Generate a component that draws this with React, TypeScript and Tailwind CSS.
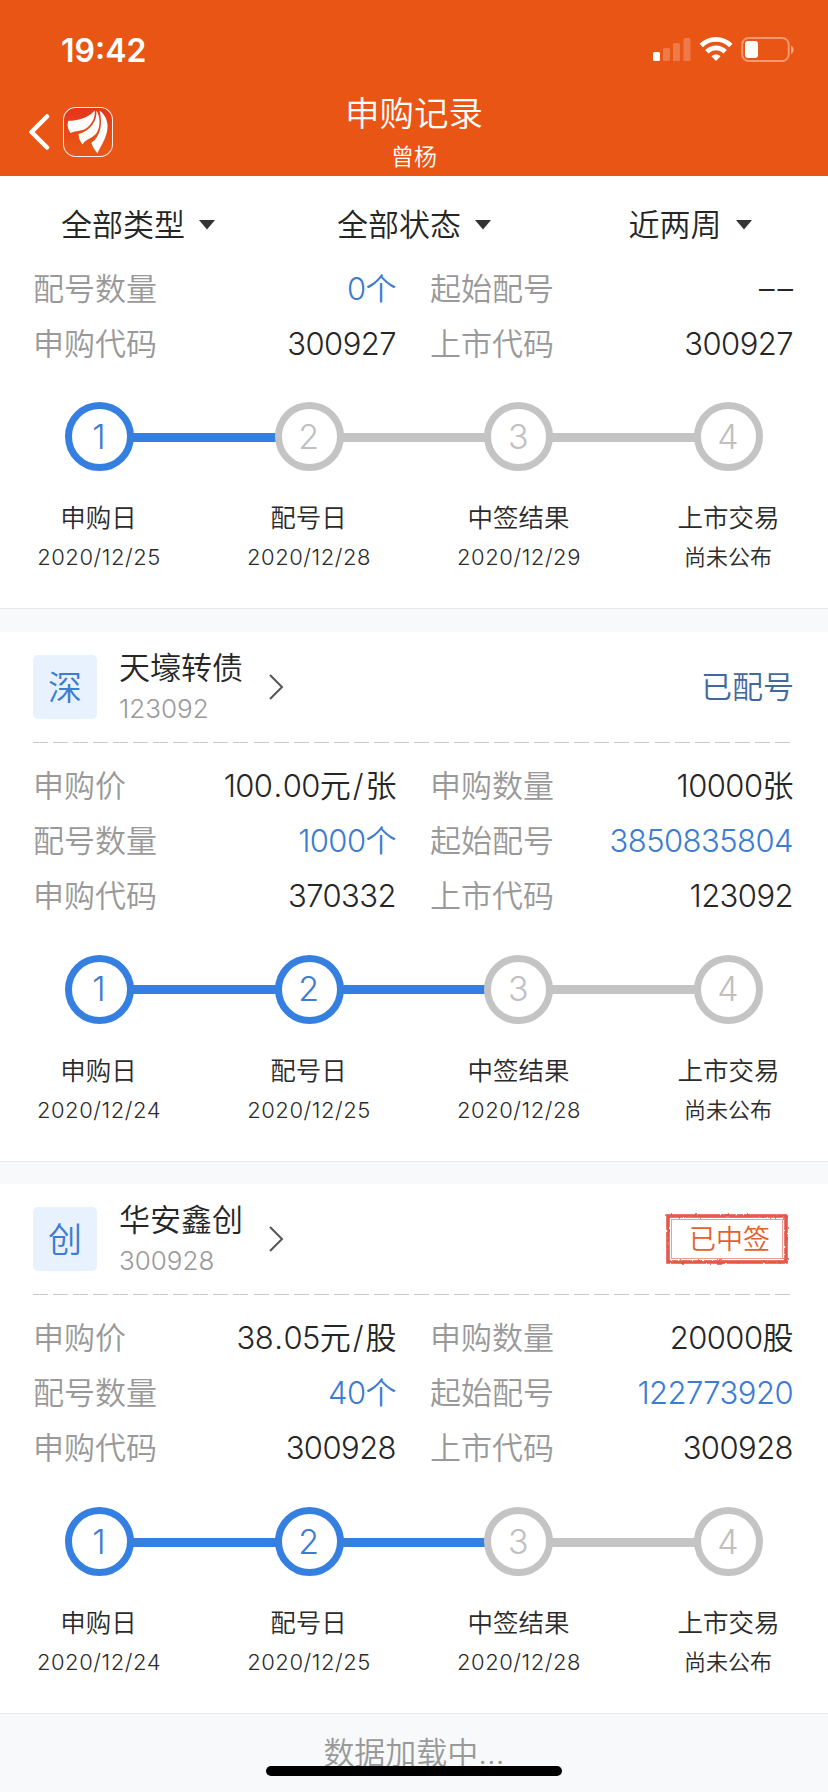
import clsx from 'clsx';

interface Field {
  label: string;
  value: string;
  link?: boolean;
}

interface Step {
  title: string;
  date: string;
}

interface RecordItem {
  badge?: string;
  name?: string;
  code?: string;
  status?: string;
  won?: boolean;
  fields: Field[];
  steps: Step[];
  reached: number;
}

const makeSteps = (a: string, b: string, c: string): Step[] => [
  { title: '申购日', date: a },
  { title: '配号日', date: b },
  { title: '中签结果', date: c },
  { title: '上市交易', date: '尚未公布' },
];

const records: RecordItem[] = [
  {
    fields: [
      { label: '配号数量', value: '0个', link: true },
      { label: '起始配号', value: '––' },
      { label: '申购代码', value: '300927' },
      { label: '上市代码', value: '300927' },
    ],
    steps: makeSteps('2020/12/25', '2020/12/28', '2020/12/29'),
    reached: 1,
  },
  {
    badge: '深',
    name: '天壕转债',
    code: '123092',
    status: '已配号',
    fields: [
      { label: '申购价', value: '100.00元/张' },
      { label: '申购数量', value: '10000张' },
      { label: '配号数量', value: '1000个', link: true },
      { label: '起始配号', value: '3850835804', link: true },
      { label: '申购代码', value: '370332' },
      { label: '上市代码', value: '123092' },
    ],
    steps: makeSteps('2020/12/24', '2020/12/25', '2020/12/28'),
    reached: 2,
  },
  {
    badge: '创',
    name: '华安鑫创',
    code: '300928',
    status: '已中签',
    won: true,
    fields: [
      { label: '申购价', value: '38.05元/股' },
      { label: '申购数量', value: '20000股' },
      { label: '配号数量', value: '40个', link: true },
      { label: '起始配号', value: '122773920', link: true },
      { label: '申购代码', value: '300928' },
      { label: '上市代码', value: '300928' },
    ],
    steps: makeSteps('2020/12/24', '2020/12/25', '2020/12/28'),
    reached: 2,
  },
];

function StatusIcons() {
  return (
    <svg width="142" height="26" viewBox="0 0 142 26" fill="#fff">
      <rect x="0" y="15" width="7" height="9" rx="1.5" />
      <g opacity="0.22">
        <rect x="10" y="11" width="7" height="13" rx="1.5" />
        <rect x="20" y="6" width="7" height="18" rx="1.5" />
        <rect x="30.5" y="1" width="7" height="23" rx="1.5" />
      </g>
      <g fill="none" stroke="#fff" strokeWidth="4.8">
        <path d="M48.2 8.6C56.8 0.4 69.2 0.4 77.8 8.6" />
        <path d="M53.8 14.8C59.2 9.6 66.8 9.6 72.2 14.8" />
      </g>
      <path d="M58.4 19.2C61 16.8 65 16.8 67.6 19.2L63 24Z" />
      <rect x="89.2" y="1" width="46.5" height="23" rx="6.5" fill="none" stroke="#fff" strokeOpacity="0.4" strokeWidth="2" />
      <rect x="92" y="4" width="13" height="17" rx="3" />
      <path d="M138 8.5C141.5 10 141.5 15.5 138 17Z" fillOpacity="0.5" />
    </svg>
  );
}

function AppLogo() {
  return (
    <svg width="50" height="50" viewBox="0 0 148 148">
      <defs>
        <linearGradient id="logo-bg" x1="0" y1="0" x2="0" y2="1">
          <stop offset="0" stopColor="#e5331b" />
          <stop offset="0.8" stopColor="#e95514" />
        </linearGradient>
      </defs>
      <rect x="1.5" y="1.5" width="145" height="145" rx="36" fill="url(#logo-bg)" stroke="#fff" strokeOpacity="0.9" strokeWidth="3" />
      <g fill="#fff">
        <path d="M94 10C72 34 45 39 16 41C11 53 15 67 22 77C38 68 58 74 74 59C88 46 96 28 94 10Z" />
        <path d="M99 10C101 40 84 68 46 80C46 92 51 103 58 111C65 94 88 94 100 76C111 56 111 30 99 10Z" />
        <path d="M108 10C118 48 112 86 84 106C87 118 95 129 102 137C111 116 131 92 132 58C132 38 124 22 108 10Z" />
      </g>
    </svg>
  );
}

function Header() {
  return (
    <header className="h-[176px] bg-[#e95514] text-white">
      <div className="flex h-[98px] items-center justify-between pl-[61px] pr-[33px]">
        <span className="mt-[3px] text-[32px] font-semibold leading-none">19:42</span>
        <div className="mt-[2px]">
          <StatusIcons />
        </div>
      </div>
      <div className="grid h-[78px] grid-cols-[1fr_auto_1fr]">
        <div className="flex h-[68px] items-center gap-[13px] pl-[28px]">
          <svg width="22" height="38" viewBox="0 0 22 38" fill="none" stroke="#fff" strokeWidth="4.5" strokeLinecap="round" strokeLinejoin="round">
            <path d="M19 3.5L3.5 19L19 34.5" />
          </svg>
          <AppLogo />
        </div>
        <div className="flex flex-col items-center font-[350]">
          <h1 className="mt-[-6px] text-[34.5px] leading-[44px]">申购记录</h1>
          <p className="mt-[7px] text-[23px] leading-7">曾杨</p>
        </div>
      </div>
    </header>
  );
}

function FilterBar() {
  return (
    <nav className="grid h-[85px] grid-cols-3 pt-[13px] text-[31px] font-[350] text-[#262626]">
      {['全部类型', '全部状态', '近两周'].map((label) => (
        <button key={label} type="button" className="flex items-center justify-center gap-[14px]">
          <span className="mt-px">{label}</span>
          <svg width="16" height="10" viewBox="0 0 16 10" fill="#333">
            <path d="M0 0H16L8 9.5Z" />
          </svg>
        </button>
      ))}
    </nav>
  );
}

function Stamp({ text }: { text: string }) {
  return (
    <div className="relative mr-[6px] flex h-[50px] w-[122px] items-center justify-center pl-[5px] text-[27px] font-[350] text-[#e5602b]">
      <svg className="absolute inset-0 overflow-visible" width="122" height="50" viewBox="0 0 122 50" fill="none">
        <filter id="rough" x="-5%" y="-10%" width="110%" height="120%">
          <feTurbulence type="fractalNoise" baseFrequency="0.25" numOctaves="2" seed="4" />
          <feDisplacementMap in="SourceGraphic" scale="2.5" xChannelSelector="R" yChannelSelector="G" />
        </filter>
        <rect x="2" y="2" width="118" height="46" stroke="#e4584b" strokeWidth="3.6" filter="url(#rough)" />
        <rect x="5.5" y="5.5" width="111" height="39" stroke="#ee9f97" strokeWidth="1" />
      </svg>
      <span className="relative top-px">{text}</span>
    </div>
  );
}

function FieldValue({ value }: { value: string }) {
  if (value === '––') {
    return <span className="mr-[-3px] tracking-[3px]">{value}</span>;
  }
  return value.split(/([./])/).map((part, i) => {
    if (part === '/') return <span key={i} className="px-[2.5px]">/</span>;
    if (part === '.') return <span key={i} className="px-px">.</span>;
    return part;
  });
}

function StepTrack({ steps, reached }: { steps: Step[]; reached: number }) {
  return (
    <div>
      <div className="flex items-center px-[65px]">
        {steps.map((step, i) => (
          <div key={step.title} className={clsx('flex items-center', i > 0 && 'flex-1')}>
            {i > 0 && (
              <div className={clsx('mt-px -mx-px h-[9px] flex-1', i <= reached ? 'bg-[#357fe0]' : 'bg-[#c4c4c4]')} />
            )}
            <div
              className={clsx(
                'flex size-[69px] items-center justify-center rounded-full border-[7px] bg-white pr-px text-[34px] font-light leading-none',
                i < reached ? 'border-[#357fe0] text-[#3c7cd2]' : 'border-[#c4c4c4] text-[#c0c0c0]',
              )}
            >
              {i + 1}
            </div>
          </div>
        ))}
      </div>
      <div className="mt-[27px] flex justify-between px-[29px] text-center font-[350] text-[#2b2b2b]">
        {steps.map((step) => (
          <div key={step.title} className="w-[140px]">
            <p className="pr-px text-[25.5px] leading-10">{step.title}</p>
            <p
              className={clsx(
                'whitespace-nowrap text-[22px] leading-[38px]',
                step.date.includes('/') ? 'tracking-[0.025em]' : 'pr-[2px]',
              )}
            >
              {step.date}
            </p>
          </div>
        ))}
      </div>
    </div>
  );
}

function RecordCard({ item }: { item: RecordItem }) {
  return (
    <article className={clsx('bg-white', item.name ? 'h-[529px]' : 'h-[347px]')}>
      {item.name && (
        <>
          <div className="flex h-[110px] items-center pl-[33px] pr-[34px] font-[350]">
            <div className="flex size-16 items-center justify-center rounded-[5px] bg-[#e8f1fe] pt-px text-[34px] text-[#3c7cd2]">
              {item.badge}
            </div>
            <div className="ml-[22px] pt-[3px]">
              <p className="text-[31px] leading-[39px] text-[#262626]">{item.name}</p>
              <p className="pt-[2px] text-[26px] leading-[40px] text-[#999]">{item.code}</p>
            </div>
            <svg className="ml-[26px]" width="15" height="26" viewBox="0 0 15 26" fill="none" stroke="#555" strokeWidth="2">
              <path d="M1 1L13 13L1 25" />
            </svg>
            <div className="ml-auto">
              {item.won ? (
                <Stamp text={item.status ?? ''} />
              ) : (
                <span className="relative top-px text-[31px] text-[#41699f]">{item.status}</span>
              )}
            </div>
          </div>
          <div className="mb-[15px] ml-[33px] mr-[37px] h-px bg-[repeating-linear-gradient(90deg,#c8c8c8_0_15px,transparent_15px_20.05px)]" />
        </>
      )}
      <dl
        className={clsx(
          'grid grid-cols-[363px_363px] gap-x-[34px] pl-[33px] text-[31px] font-[350]',
          item.name ? 'mb-8' : 'mb-[31px]',
        )}
      >
        {item.fields.map((f) => (
          <div key={f.label} className="flex h-[55px] items-center justify-between pt-[2px]">
            <dt className="text-[#999]">{f.label}</dt>
            <dd className={clsx('tracking-[-0.018em]', f.link ? 'text-[#3c7cd2]' : 'text-[#262626]')}>
              <FieldValue value={f.value} />
            </dd>
          </div>
        ))}
      </dl>
      <StepTrack steps={item.steps} reached={item.reached} />
    </article>
  );
}

export default function App() {
  return (
    <div className="relative flex h-[1792px] w-[828px] flex-col overflow-hidden bg-[#f7f9fb] font-[Inter,'Noto_Sans_CJK_SC',sans-serif]">
      <Header />
      <div className="bg-white">
        <FilterBar />
      </div>
      <main>
        {records.map((item, i) => (
          <div key={i}>
            <RecordCard item={item} />
            <div className="h-[23.5px] border-t border-[#e6e9ec]" />
          </div>
        ))}
      </main>
      <p className="mt-[-7px] text-center text-[31px] font-[350] leading-[46px] text-[#999]">数据加载中...</p>
      <div className="absolute bottom-4 left-[266px] h-[10px] w-[296px] rounded-full bg-black" />
    </div>
  );
}
